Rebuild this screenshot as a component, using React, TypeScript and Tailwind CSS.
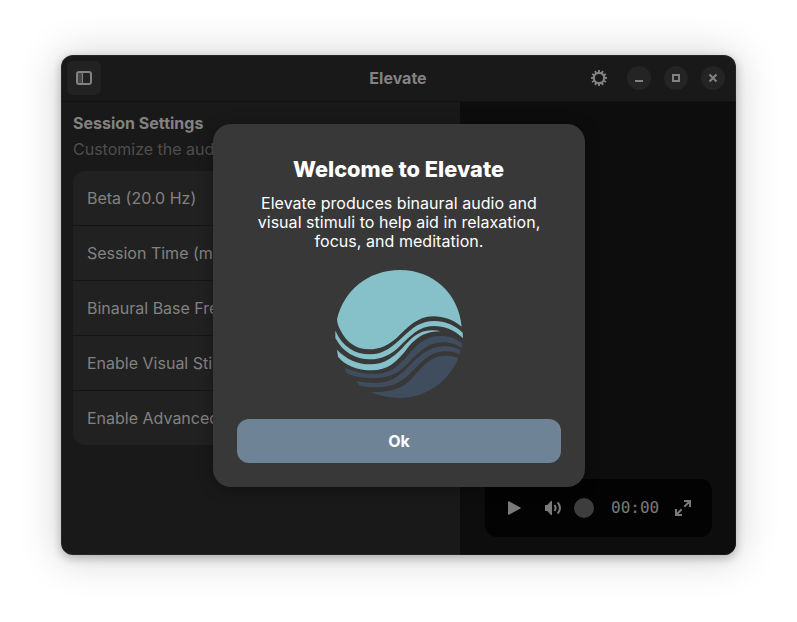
import React from "react";

const rows = [
  "Beta (20.0 Hz)",
  "Session Time (minutes)",
  "Binaural Base Frequency",
  "Enable Visual Stimuli",
  "Enable Advanced",
];

function SidebarIcon() {
  return (
    <svg width="16" height="14" viewBox="0 0 16 14">
      <rect x="1" y="1" width="14" height="12" rx="2" fill="none" stroke="#828282" strokeWidth="2" />
      <rect x="2" y="2" width="4" height="10" fill="#464646" />
      <rect x="6" y="2" width="1" height="10" fill="#828282" />
    </svg>
  );
}

function GearIcon() {
  const teeth = [0, 30, 60, 90, 120, 150, 180, 210, 240, 270, 300, 330];
  return (
    <svg width="16" height="16" viewBox="0 0 16 16">
      <circle cx="8" cy="8" r="5.2" fill="none" stroke="#828282" strokeWidth="2.2" />
      {teeth.map((a) => (
        <rect key={a} x="7.05" y="0" width="1.9" height="2.6" fill="#828282" transform={`rotate(${a} 8 8)`} />
      ))}
    </svg>
  );
}

function WindowButton({ children }: { children: React.ReactNode }) {
  return (
    <div className="flex h-6 w-6 items-center justify-center rounded-full bg-[#242424]">
      <svg width="16" height="16" viewBox="0 0 16 16" fill="none" stroke="#828282" strokeWidth="2">
        {children}
      </svg>
    </div>
  );
}

function Logo() {
  return (
    <svg className="block" width="130" height="130" viewBox="27 21 390 390">
      <g fill="#86c0c8">
        <path d="M36 172C56 85 130 24 225 24C325 24 402 95 410 194C385 173 355 163 325 163C275 163 245 200 215 228C190 250 165 262 133 262C90 262 64 239 48 208C41 196 37 186 36 172Z" />
        <path d="M31 206C52 254 90 277 135 277C177 277 203 253 230 228C263 197 286 177 328 177C360 177 390 190 413 212L414 229C387 202 356 192 326 192C282 192 255 223 225 252C197 279 170 292 135 292C91 292 54 271 31 228Z" />
        <path d="M36 263C64 292 98 307 135 307C178 307 205 285 230 260C256 233 277 205 321 205Q338 205 345 208C303 209 278 222 250 255C216 301 188 325 140 325C99 325 61 311 39 284Z" />
      </g>
      <g fill="#404d5f">
        <path d="M58 317Q100 335 150 335C193 335 213 317 240 290C268 256 297 222 345 222C375 222 394 229 409 243L411 258C390 245 374 241 353 241C309 241 282 270 250 303C221 332 198 348 149 348C112 348 86 345 65 333Z" />
        <path d="M93 357Q120 363 150 363C190 363 214 349 240 325C275 289 307 253 360 253Q386 253 406 265L404 277Q386 268 362 268C316 268 295 295 250 340C217 369 188 376 151 376Q122 376 103 370Z" />
        <path d="M138 391C183 389 219 389 252 358C289 322 308 281 364 281Q386 281 400 289C368 363 300 408 225 408Q180 408 138 391Z" />
      </g>
    </svg>
  );
}

function Player() {
  return (
    <div className="flex h-[58px] w-[227px] items-center rounded-xl bg-[#030303] pl-[21px] text-[#7a7a7a]">
      <svg width="16" height="16" viewBox="0 0 16 16" fill="currentColor">
        <path d="M2 1.8Q2 .8 3 1.3L14.4 7.4Q15.4 8 14.4 8.6L3 14.7Q2 15.2 2 14.2Z" />
      </svg>
      <svg className="ml-[23px]" width="16" height="16" viewBox="0 0 16 16" fill="none" stroke="currentColor" strokeWidth="2">
        <path d="M0 5h2.2L6 1h1v14H6L2.2 11H0Z" fill="currentColor" stroke="none" />
        <path d="M9.4 5Q11.8 8 9.4 11M12.7 2.4Q17.2 8 12.7 13.6" />
      </svg>
      <div className="ml-[13px] h-5 w-5 rounded-full bg-[#3d3d3d]" />
      <span className="ml-[17px] w-[48px] font-['DejaVu_Sans_Mono',monospace] text-base leading-none tracking-normal">00:00</span>
      <svg className="ml-4" width="16" height="16" viewBox="0 0 16 16" fill="none" stroke="currentColor" strokeWidth="2">
        <path d="M9 1h6v6M15 1L9.3 6.7M7 15H1V9M1 15l5.7-5.7" />
      </svg>
    </div>
  );
}

function WelcomeDialog() {
  return (
    <div className="absolute left-[152px] top-[69px] flex h-[363px] w-[372px] flex-col items-center rounded-[18px] bg-[#383838] px-6 pt-[31px] text-white shadow-[0_2px_14px_2px_rgba(0,0,0,0.25)]">
      <h1 className="pr-px text-[21.75px] leading-[29px] font-extrabold whitespace-nowrap">Welcome to Elevate</h1>
      <p className="mt-[9.5px] h-[58.5px] text-center text-base leading-[19.3px] tracking-[0.04px] whitespace-nowrap">
        Elevate produces binaural audio and
        <br />
        visual stimuli to help aid in relaxation,
        <br />
        focus, and meditation.
      </p>
      <div className="mt-[17px]">
        <Logo />
      </div>
      <button className="mt-auto mb-6 h-11 w-full shrink-0 rounded-xl bg-[#6f8396] text-base font-bold">Ok</button>
    </div>
  );
}

export default function App() {
  return (
    <div className="h-[622px] w-[797px] overflow-hidden bg-white pt-[55px] pl-[61px] font-['Inter',sans-serif]">
      <div className="relative h-[500px] w-[675px] rounded-xl shadow-[0_3px_9px_1px_rgba(0,0,0,0.22),0_2px_40px_4px_rgba(0,0,0,0.16)]">
        <div className="flex h-full flex-col overflow-hidden rounded-xl bg-[#191919] text-[#828282]">
          <header className="grid h-[47px] shrink-0 grid-cols-[1fr_auto_1fr] items-center border-b border-[#121212] px-1.5">
            <div className="flex h-[34px] w-[34px] items-center justify-center rounded-md bg-[#222222]">
              <SidebarIcon />
            </div>
            <div className="pr-px text-base font-bold">Elevate</div>
            <div className="flex items-center justify-end pr-[5px]">
              <div className="mr-5">
                <GearIcon />
              </div>
              <div className="flex gap-[13px]">
                <WindowButton><path d="M4 11h8" /></WindowButton>
                <WindowButton><rect x="5" y="5" width="6" height="6" /></WindowButton>
                <WindowButton><path d="M4.5 4.5l7 7M11.5 4.5l-7 7" /></WindowButton>
              </div>
            </div>
          </header>
          <div className="flex min-h-0 flex-1">
            <aside className="w-[399px] px-3 pt-[10px] text-base">
              <h2 className="leading-[22px] font-bold">Session Settings</h2>
              <p className="mt-1 leading-[22px] whitespace-nowrap text-[#4e4e4e]">Customize the audio and visual session</p>
              <div className="mt-[11px] divide-y divide-[#161616] overflow-hidden rounded-xl bg-[#212121]">
                {rows.map((r) => (
                  <div key={r} className="flex h-[55px] items-center px-3.5 last:h-[54px]">{r}</div>
                ))}
              </div>
            </aside>
            <main className="flex flex-1 items-end justify-end bg-[#0d0d0d] pr-6 pb-[18px]">
              <Player />
            </main>
          </div>
        </div>
        <div className="pointer-events-none absolute inset-0 rounded-xl border border-white/5" />
        <WelcomeDialog />
      </div>
    </div>
  );
}
